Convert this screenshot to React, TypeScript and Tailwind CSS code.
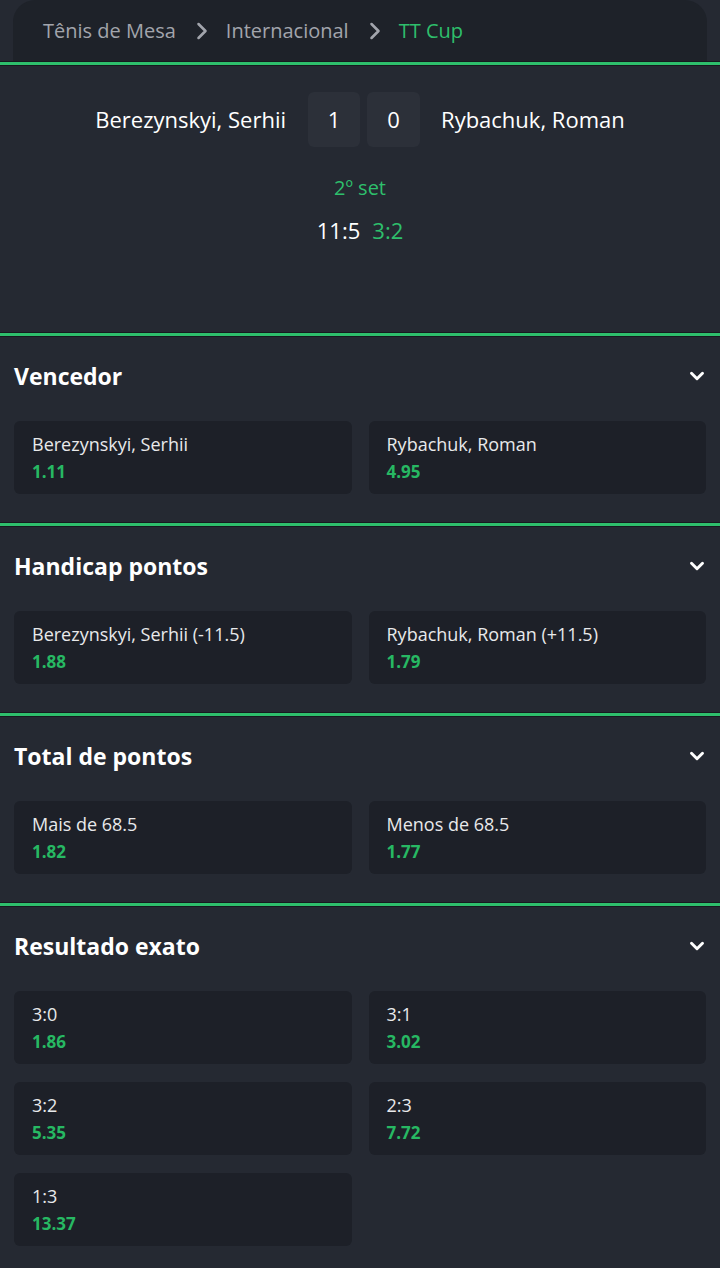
import { ChevronDown, ChevronRight } from "lucide-react";

type Odd = { label: string; price: string };
type Market = { title: string; odds: Odd[] };

const markets: Market[] = [
  {
    title: "Vencedor",
    odds: [
      { label: "Berezynskyi, Serhii", price: "1.11" },
      { label: "Rybachuk, Roman", price: "4.95" },
    ],
  },
  {
    title: "Handicap pontos",
    odds: [
      { label: "Berezynskyi, Serhii (-11.5)", price: "1.88" },
      { label: "Rybachuk, Roman (+11.5)", price: "1.79" },
    ],
  },
  {
    title: "Total de pontos",
    odds: [
      { label: "Mais de 68.5", price: "1.82" },
      { label: "Menos de 68.5", price: "1.77" },
    ],
  },
  {
    title: "Resultado exato",
    odds: [
      { label: "3:0", price: "1.86" },
      { label: "3:1", price: "3.02" },
      { label: "3:2", price: "5.35" },
      { label: "2:3", price: "7.72" },
      { label: "1:3", price: "13.37" },
    ],
  },
];

function GreenLine() {
  return (
    <div className="border-y border-[#171a1f]">
      <div className="h-[3px] bg-[#2ebf6c]" />
    </div>
  );
}

function MarketBlock({ market }: { market: Market }) {
  return (
    <section>
      <GreenLine />
      <div className="h-[84px] px-[14px] pb-[6px] flex items-center justify-between">
        <h2 className="text-[23px] font-bold text-white">{market.title}</h2>
        <ChevronDown size={22} strokeWidth={3.2} className="text-white mr-[-2px]" />
      </div>
      <div className="grid grid-cols-2 gap-x-[17px] gap-y-[18px] px-[14px] pb-[28px]">
        {market.odds.map((odd) => (
          <button
            key={odd.label}
            className="h-[73px] rounded-[6px] bg-[#1d2028] pl-[18px] flex flex-col justify-center items-start text-left"
          >
            <span className="text-[18px] leading-[28px] text-[#e8e9eb]">{odd.label}</span>
            <span className="text-[17px] leading-[28px] font-bold text-[#27b863]">{odd.price}</span>
          </button>
        ))}
      </div>
    </section>
  );
}

export default function App() {
  return (
    <div className="min-h-[1268px] w-[720px] bg-[#252932] font-['Open_Sans',sans-serif] overflow-hidden">
      {/* BREADCRUMB */}
      <div className="mx-[13px] h-[61px] rounded-t-[22px] bg-[#1e2229] flex items-center px-[30px] text-[20px]">
        <span className="text-[#a2a5ac]">Tênis de Mesa</span>
        <ChevronRight size={28} strokeWidth={2.2} className="text-[#a2a5ac] ml-[12px] mr-[10px]" />
        <span className="text-[#a2a5ac]">Internacional</span>
        <ChevronRight size={28} strokeWidth={2.2} className="text-[#a2a5ac] ml-[12px] mr-[10px]" />
        <span className="text-[#2ebf6c]">TT Cup</span>
      </div>
      <GreenLine />

      {/* SCOREBOARD */}
      <div className="h-[266px] flex flex-col items-center pt-[26px]">
        <div className="flex items-center">
          <span className="text-[22px] text-white mr-[22px]">Berezynskyi, Serhii</span>
          <div className="w-[52px] h-[55px] rounded-[6px] bg-[#2c3039] flex items-center justify-center text-[22px] text-white">1</div>
          <div className="w-[53px] h-[55px] rounded-[6px] bg-[#2c3039] flex items-center justify-center text-[22px] text-white ml-[7px]">0</div>
          <span className="text-[22px] text-white ml-[21px]">Rybachuk, Roman</span>
        </div>
        <div className="mt-[27px] text-[20px] leading-[28px] text-[#2ebf6c]">2º set</div>
        <div className="mt-[14px] flex gap-[12px] text-[22px] leading-[28px]">
          <span className="text-white">11:5</span>
          <span className="text-[#2ebf6c]">3:2</span>
        </div>
      </div>

      {markets.map((m) => (
        <MarketBlock key={m.title} market={m} />
      ))}
    </div>
  );
}
